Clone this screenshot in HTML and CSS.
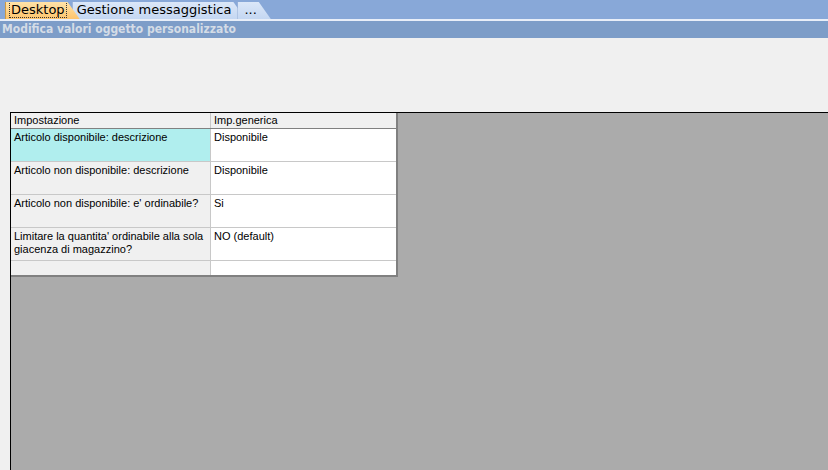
FILE: index.html
```html
<!DOCTYPE html>
<html lang="it">

<head>
    <meta charset="UTF-8">
    <title>Modifica valori oggetto personalizzato</title>
    <link rel="stylesheet" href="styles.css">
</head>

<body>
    <!-- Tab bar -->
    <div class="tab-bar">
        <div class="tab tab-active"><span class="focus">Desktop</span></div>
        <div class="tab">Gestione messaggistica</div>
        <div class="tab tab-more">...</div>
    </div>

    <!-- Window title -->
    <div class="title-bar">Modifica valori oggetto personalizzato</div>

    <!-- Content -->
    <div class="content">
        <div class="grid-frame">
            <table class="grid">
                <tr class="head">
                    <td class="col1">Impostazione</td>
                    <td class="col2">Imp.generica</td>
                </tr>
                <tr>
                    <td class="col1 selected">Articolo disponibile: descrizione</td>
                    <td class="col2">Disponibile</td>
                </tr>
                <tr>
                    <td class="col1">Articolo non disponibile: descrizione</td>
                    <td class="col2">Disponibile</td>
                </tr>
                <tr>
                    <td class="col1">Articolo non disponibile: e' ordinabile?</td>
                    <td class="col2">Si</td>
                </tr>
                <tr>
                    <td class="col1">Limitare la quantita' ordinabile alla sola giacenza di magazzino?</td>
                    <td class="col2">NO (default)</td>
                </tr>
                <tr class="empty">
                    <td class="col1"></td>
                    <td class="col2"></td>
                </tr>
            </table>
        </div>
    </div>
</body>

</html>
```

FILE: styles.css
```css
/* Page */
html,
body {
    height: 100%;
}

body {
    margin: 0;
    padding: 0;
    font-family: 'DejaVu Sans', 'Liberation Sans', sans-serif;
    background-color: #f0f0f0;
    display: flex;
    flex-direction: column;
    overflow: hidden;
}

/* Tab bar */
.tab-bar {
    height: 19px;
    background-color: #88a8d8;
    border-bottom: 2px solid #e8eef8;
    display: flex;
    align-items: flex-end;
    padding-left: 5px;
    font-family: 'DejaVu Sans', sans-serif;
    font-size: 13px;
}

.tab {
    height: 17px;
    line-height: 16px;
    padding: 0 14px 0 4px;
    margin-right: -8px;
    color: #000;
    background: linear-gradient(#dbe7f8, #c4d7f2);
    clip-path: polygon(0 0, calc(100% - 12px) 0, 100% 100%, 0 100%);
    border-left: 1px solid #9fb6da;
}

.tab-active {
    position: relative;
    z-index: 2;
    background: linear-gradient(#ffe3a8, #fdc46c);
    border-left: 1px solid #d09a40;
}

.tab-more {
    padding-left: 6px;
    padding-right: 14px;
}

.focus {
    outline: 1px dotted #333;
    padding: 0 1px;
}

/* Title bar */
.title-bar {
    height: 17px;
    line-height: 16px;
    background-color: #7d9dc8;
    color: #d4dce6;
    font-weight: bold;
    font-size: 12px;
    padding-left: 2px;
    font-family: 'DejaVu Sans Condensed', 'DejaVu Sans', sans-serif;
    font-stretch: condensed;
}

/* Content area */
.content {
    flex: 1;
    padding: 74px 0 0 10px;
    display: flex;
}

.grid-frame {
    flex: 1;
    background-color: #ababab;
    border-top: 1px solid #000;
    border-left: 1px solid #000;
}

/* Grid table */
.grid {
    border-collapse: collapse;
    font-size: 11px;
    font-family: 'Liberation Sans', sans-serif;
    color: #000;
    table-layout: fixed;
    width: 387px;
    border-right: 2px solid #808080;
    border-bottom: 2px solid #808080;
}

.grid td {
    vertical-align: top;
    padding: 2px 3px;
    height: 28px;
    border: 1px solid #c8c8c8;
    line-height: 13px;
}

.grid tr:first-child td {
    border-top: none;
}

.grid td.col1 {
    width: 193px;
    background-color: #f0f0f0;
    border-left: none;
}

.grid td.col2 {
    background-color: #fff;
}

.grid .head td {
    height: 14px;
    padding: 1px 3px 0;
    background-color: #f0f0f0;
    border-bottom: 1px solid #808080;
}

.grid td.selected {
    background-color: #b0eeee;
}

.grid .empty td {
    height: 13px;
    padding: 1px 3px 0;
}
```
